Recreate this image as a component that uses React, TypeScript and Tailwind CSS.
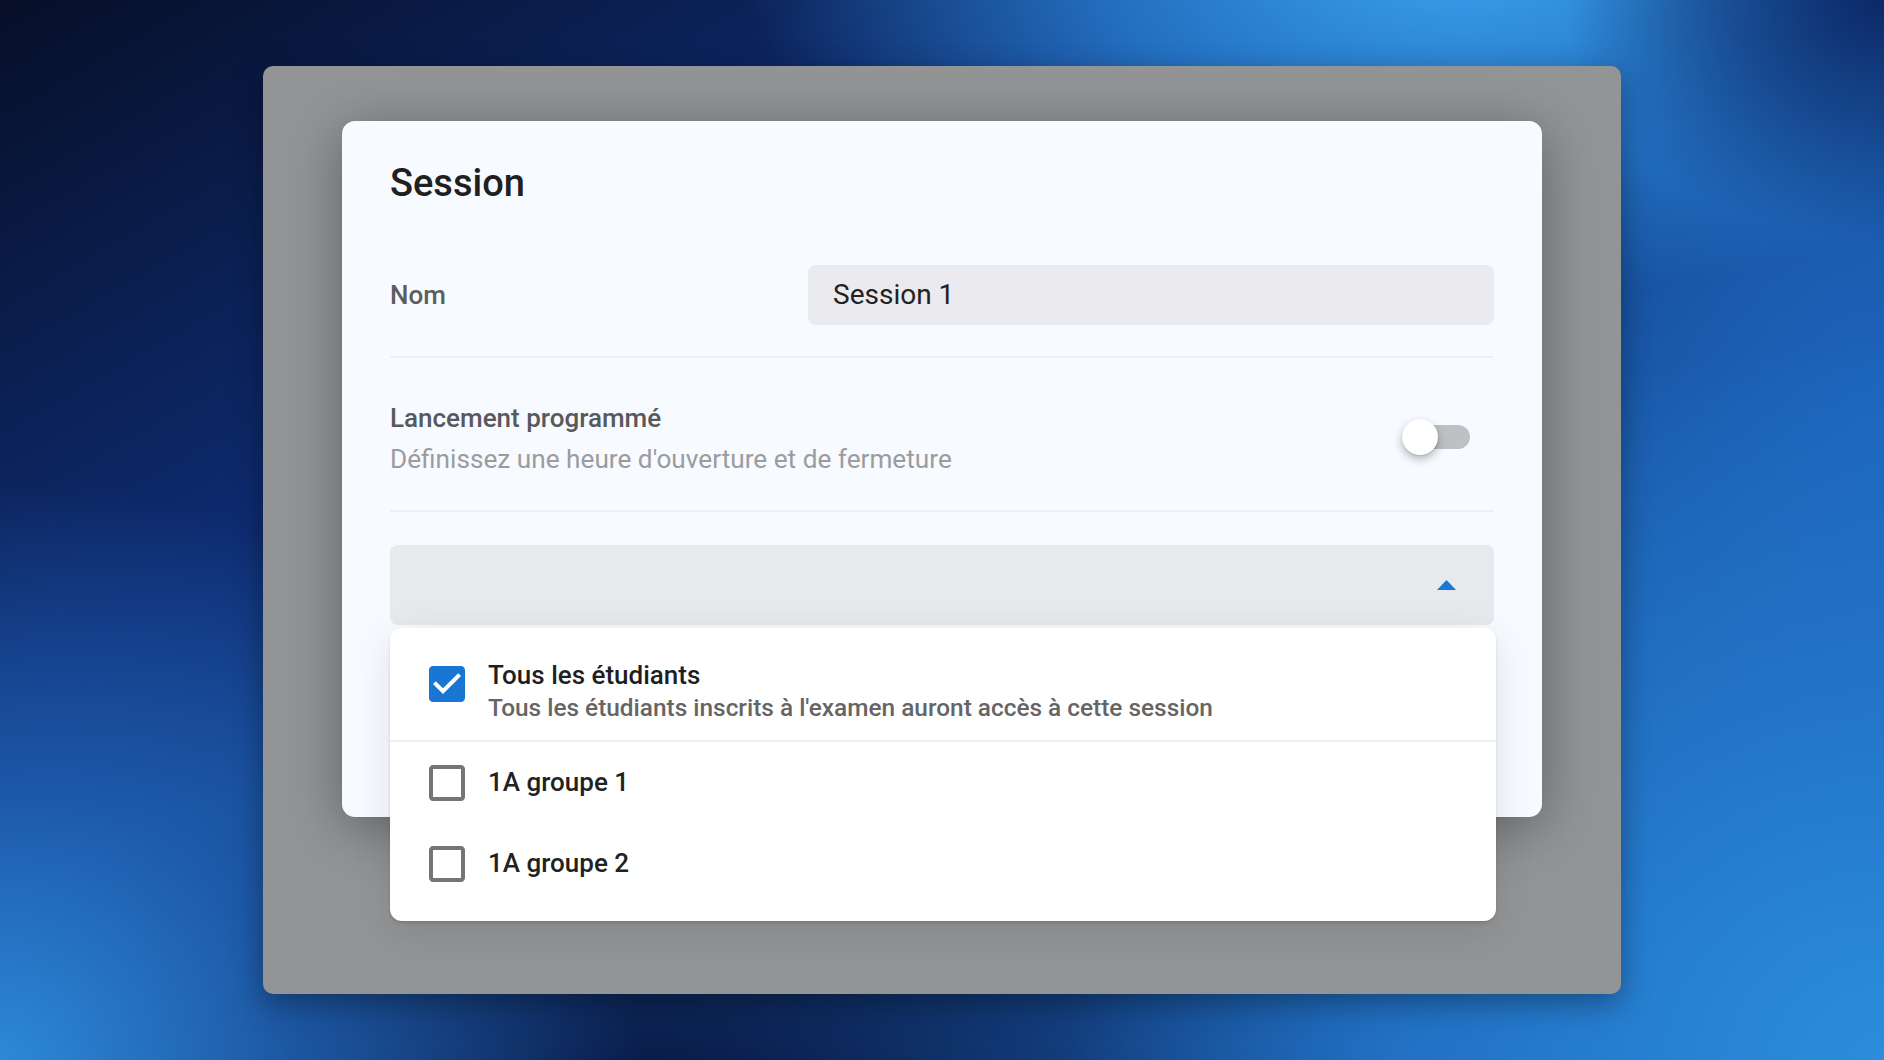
import React from "react";

const groups = ["1A groupe 1", "1A groupe 2"];

function CheckedBox() {
  return (
    <svg viewBox="3 3 18 18" className="h-[36px] w-[36px] shrink-0">
      <path
        fill="#1976d2"
        d="M19 3H5c-1.11 0-2 .9-2 2v14c0 1.1.89 2 2 2h14c1.11 0 2-.9 2-2V5c0-1.1-.89-2-2-2zm-9 14l-5-5 1.41-1.41L10 14.17l7.59-7.59L19 8l-9 9z"
      />
    </svg>
  );
}

function EmptyBox() {
  return (
    <svg viewBox="3 3 18 18" className="h-[36px] w-[36px] shrink-0">
      <path
        fill="#757575"
        d="M19 5v14H5V5h14m0-2H5c-1.1 0-2 .9-2 2v14c0 1.1.9 2 2 2h14c1.1 0 2-.9 2-2V5c0-1.1-.9-2-2-2z"
      />
    </svg>
  );
}

export default function App() {
  return (
    <div className="flex h-[1060px] w-full items-center justify-center font-[Roboto,'Noto_Sans',sans-serif] [background-image:radial-gradient(320px_240px_at_1884px_0px,#0c2866_0%,rgba(12,40,102,0.55)_50%,transparent_100%),radial-gradient(720px_340px_at_1460px_-40px,#3aa3ef_0%,rgba(45,140,225,0.7)_50%,transparent_100%),radial-gradient(820px_720px_at_1884px_1060px,#2b8ddc_0%,rgba(40,130,215,0.6)_50%,transparent_100%),radial-gradient(420px_500px_at_1884px_430px,#1d64bd_0%,transparent_100%),radial-gradient(640px_580px_at_0px_1060px,#2d88d8_0%,rgba(40,120,210,0.55)_45%,transparent_100%),radial-gradient(760px_380px_at_650px_1110px,#08143d_0%,transparent_100%),linear-gradient(150deg,#070f28_0%,#0e2c72_32%,#18559f_66%,#1e68c0_100%)]">
      {/* gray backdrop */}
      <div className="h-[928px] w-[1358px] rounded-[10px] bg-[#939496] px-[79px] pt-[55px] shadow-[0_10px_30px_rgba(0,0,0,0.35)]">
        {/* Card */}
        <div className="relative h-[696px] w-[1200px] rounded-[13px] bg-[#f7faff] px-[48px] pt-[40px] shadow-[0_10px_55px_rgba(0,0,0,0.35)]">
          <h1 className="text-[38px] font-medium leading-[44px] text-[#202020]">Session</h1>

          <div className="mt-[60px] flex items-center justify-between">
            <span className="text-[26px] font-medium text-[#5c5d60]">Nom</span>
            <div className="flex h-[60px] w-[686px] items-center rounded-[8px] bg-[#ebebef] px-[25px] text-[28px] text-[#222]">
              Session 1
            </div>
          </div>

          <div className="mt-[31px] h-[2px] bg-[#edf0f4]" />

          <div className="flex items-center justify-between pb-[33px] pr-[24px] pt-[42px]">
            <div className="flex flex-col">
              <span className="text-[26px] font-medium leading-[36px] text-[#58595c]">Lancement programmé</span>
              <span className="mt-[5px] text-[26.2px] leading-[36px] text-[#9b9c9e]">
                Définissez une heure d'ouverture et de fermeture
              </span>
            </div>
            <div className="relative mb-[4px] h-[36px] w-[68px]">
              <div className="absolute right-0 top-[6px] h-[24px] w-[58px] rounded-full bg-[#bec0c3]" />
              <div className="absolute left-0 top-0 h-[36px] w-[36px] rounded-full bg-white shadow-[0_4px_10px_rgba(0,0,0,0.28),0_1px_2px_rgba(0,0,0,0.12)]" />
            </div>
          </div>

          <div className="h-[2px] bg-[#edf0f4]" />

          {/* Select */}
          <div className="relative mt-[33px]">
            <div className="flex h-[80px] items-center justify-end rounded-[8px] bg-[#e8e9ed] pr-[38px]">
              <svg width="19" height="10" viewBox="0 0 19 10">
                <polygon points="0,10 9.5,0 19,10" fill="#1976d2" />
              </svg>
            </div>

            {/* Options popover */}
            <div className="absolute left-0 top-[83px] z-10 w-[1106px] rounded-[12px] bg-white pb-[17px] shadow-[0_2px_3px_rgba(0,0,0,0.12),0_10px_40px_rgba(0,0,0,0.1)]">
              <div className="flex items-start gap-[23px] pb-[16px] pl-[39px] pt-[30px]">
                <div className="mt-[8px]">
                  <CheckedBox />
                </div>
                <div className="flex flex-col">
                  <span className="text-[26px] font-medium leading-[34px] text-[#1f1f1f]">Tous les étudiants</span>
                  <span className="text-[24.4px] font-medium leading-[32px] text-[#656565]">
                    Tous les étudiants inscrits à l'examen auront accès à cette session
                  </span>
                </div>
              </div>
              <div className="h-[2px] bg-[#eef0f3]" />
              {groups.map((g) => (
                <div key={g} className="flex h-[81px] items-center gap-[23px] pl-[39px]">
                  <EmptyBox />
                  <span className="text-[26px] font-medium text-[#222]">{g}</span>
                </div>
              ))}
            </div>
          </div>
        </div>
      </div>
    </div>
  );
}
